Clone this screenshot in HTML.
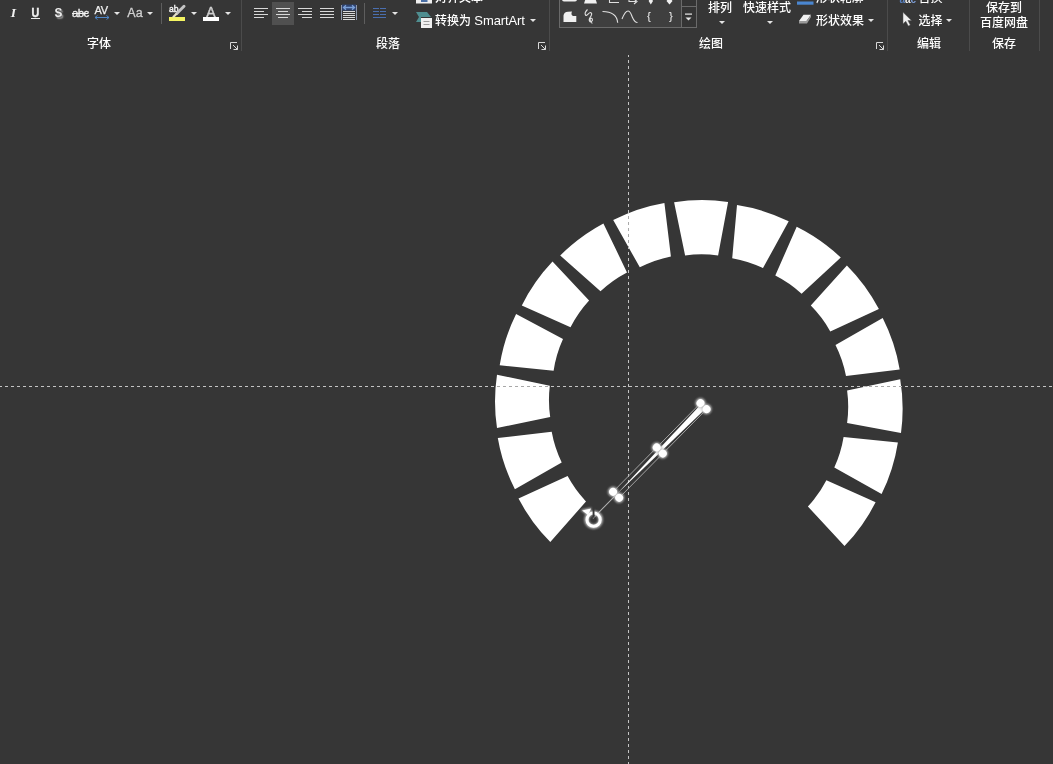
<!DOCTYPE html>
<html lang="zh-CN">
<head>
<meta charset="utf-8">
<title>PowerPoint</title>
<style>
*{margin:0;padding:0;box-sizing:border-box}
html,body{width:1053px;height:764px;overflow:hidden;background:#363636}
body{position:relative;font-family:"Liberation Sans","Noto Sans CJK SC",sans-serif;font-size:12px;font-weight:500;color:#ffffff;line-height:1}
.t{position:absolute;white-space:nowrap;line-height:14px;height:14px}
.c{transform:translateX(-50%)}
.sep{position:absolute;width:1px;background:#4b4b4b;top:0;height:51px}
.sep2{position:absolute;width:1px;background:#5e5e5e;top:3px;height:21px}
.g{color:#f0f0f0}
.ul{position:absolute;height:1px;background:#e8e8e8}
.bar{position:absolute;height:4px}
.hl{position:absolute;background:#505050}
.gal{position:absolute;background:#3f3f3f;border:1px solid #6a6a6a}
.gal2{position:absolute;background:#343434;border:1px solid #6a6a6a}
.gal3{position:absolute;background:#6a6a6a}
.ar{position:absolute;width:0;height:0;border-left:3px solid transparent;border-right:3px solid transparent;border-top:3px solid #e4e4e4}
svg{position:absolute;left:0;top:0;overflow:visible}
#stage{position:absolute;left:0;top:0;width:1053px;height:764px;will-change:transform;transform:translateZ(0)}
</style>
</head>
<body>
<div id="stage">
<svg id="canvas" width="1053" height="764" viewBox="0 0 1053 764">
<defs><clipPath id="gclip"><path d="M550.3 542.0A180.0 180.0 0 0 1 518.5 498.4L567.6 476.0A120.0 120.0 0 0 0 586.0 501.4ZM514.9 489.3A180.0 180.0 0 0 1 497.8 438.0L551.7 431.7A120.0 120.0 0 0 0 561.7 462.4ZM497.0 428.1A180.0 180.0 0 0 1 497.0 374.8L549.8 385.7A120.0 120.0 0 0 0 550.2 417.1ZM499.7 365.2A180.0 180.0 0 0 1 516.1 314.0L563.0 339.0A120.0 120.0 0 0 0 553.6 370.7ZM521.8 305.5A180.0 180.0 0 0 1 552.5 261.5L589.1 300.5A120.0 120.0 0 0 0 570.5 327.3ZM560.2 255.6A180.0 180.0 0 0 1 603.4 223.4L627.0 272.4A120.0 120.0 0 0 0 600.5 291.2ZM613.2 220.1A180.0 180.0 0 0 1 664.4 203.0L670.9 256.4A120.0 120.0 0 0 0 639.8 267.3ZM674.1 202.3A180.0 180.0 0 0 1 728.1 202.0L718.1 255.4A120.0 120.0 0 0 0 685.1 255.4ZM737.0 205.0A180.0 180.0 0 0 1 788.7 221.3L763.0 268.1A120.0 120.0 0 0 0 732.2 258.2ZM796.7 226.7A180.0 180.0 0 0 1 840.8 257.6L801.6 293.7A120.0 120.0 0 0 0 775.3 275.5ZM846.9 265.5A180.0 180.0 0 0 1 878.9 309.1L830.3 331.4A120.0 120.0 0 0 0 810.8 305.6ZM882.7 318.0A180.0 180.0 0 0 1 899.7 369.4L846.0 376.0A120.0 120.0 0 0 0 835.5 345.0ZM900.2 379.2A180.0 180.0 0 0 1 901.0 432.9L847.1 422.9A120.0 120.0 0 0 0 847.1 390.4ZM897.9 442.4A180.0 180.0 0 0 1 881.6 494.0L834.3 467.5A120.0 120.0 0 0 0 843.6 437.0ZM875.6 502.2A180.0 180.0 0 0 1 844.5 546.1L807.9 506.6A120.0 120.0 0 0 0 826.4 480.2Z"/></clipPath></defs>
<path id="gauge" fill="#ffffff" d="M550.3 542.0A180.0 180.0 0 0 1 518.5 498.4L567.6 476.0A120.0 120.0 0 0 0 586.0 501.4ZM514.9 489.3A180.0 180.0 0 0 1 497.8 438.0L551.7 431.7A120.0 120.0 0 0 0 561.7 462.4ZM497.0 428.1A180.0 180.0 0 0 1 497.0 374.8L549.8 385.7A120.0 120.0 0 0 0 550.2 417.1ZM499.7 365.2A180.0 180.0 0 0 1 516.1 314.0L563.0 339.0A120.0 120.0 0 0 0 553.6 370.7ZM521.8 305.5A180.0 180.0 0 0 1 552.5 261.5L589.1 300.5A120.0 120.0 0 0 0 570.5 327.3ZM560.2 255.6A180.0 180.0 0 0 1 603.4 223.4L627.0 272.4A120.0 120.0 0 0 0 600.5 291.2ZM613.2 220.1A180.0 180.0 0 0 1 664.4 203.0L670.9 256.4A120.0 120.0 0 0 0 639.8 267.3ZM674.1 202.3A180.0 180.0 0 0 1 728.1 202.0L718.1 255.4A120.0 120.0 0 0 0 685.1 255.4ZM737.0 205.0A180.0 180.0 0 0 1 788.7 221.3L763.0 268.1A120.0 120.0 0 0 0 732.2 258.2ZM796.7 226.7A180.0 180.0 0 0 1 840.8 257.6L801.6 293.7A120.0 120.0 0 0 0 775.3 275.5ZM846.9 265.5A180.0 180.0 0 0 1 878.9 309.1L830.3 331.4A120.0 120.0 0 0 0 810.8 305.6ZM882.7 318.0A180.0 180.0 0 0 1 899.7 369.4L846.0 376.0A120.0 120.0 0 0 0 835.5 345.0ZM900.2 379.2A180.0 180.0 0 0 1 901.0 432.9L847.1 422.9A120.0 120.0 0 0 0 847.1 390.4ZM897.9 442.4A180.0 180.0 0 0 1 881.6 494.0L834.3 467.5A120.0 120.0 0 0 0 843.6 437.0ZM875.6 502.2A180.0 180.0 0 0 1 844.5 546.1L807.9 506.6A120.0 120.0 0 0 0 826.4 480.2Z"/>
<g id="guides" stroke="#c4c4c4" stroke-width="1" stroke-dasharray="3 3" stroke-dashoffset="1" shape-rendering="crispEdges"><line x1="0" y1="386.5" x2="1053" y2="386.5"/><line x1="628.5" y1="55" x2="628.5" y2="764"/></g>
<g id="guides2" clip-path="url(#gclip)" stroke="#a8a8a8" stroke-width="1" stroke-dasharray="3 3" stroke-dashoffset="1" shape-rendering="crispEdges"><line x1="0" y1="386.5" x2="1053" y2="386.5"/><line x1="628.5" y1="55" x2="628.5" y2="764"/></g>
<defs><filter id="glow" x="-50%" y="-50%" width="200%" height="200%"><feGaussianBlur stdDeviation="0.9"/></filter></defs>
<g id="needle" transform="translate(616.1 494.8) rotate(-45.4)">
<line x1="0" y1="0" x2="-33" y2="0" stroke="#b4b4b4" stroke-width="1"/>
<rect x="0" y="-4.300" width="124.500" height="8.600" fill="none" stroke="#a8a8a8" stroke-width="0.900"/>
<path d="M0 0L124.500 -3.200L124.500 3.200Z" fill="#ffffff"/>
<g fill="#c8c8c8" filter="url(#glow)">
<circle cx="0" cy="-4.300" r="5"/><circle cx="0" cy="4.300" r="5"/>
<circle cx="62.200" cy="-4.300" r="5"/><circle cx="62.200" cy="4.300" r="5"/>
<circle cx="124.500" cy="-4.300" r="5"/><circle cx="124.500" cy="4.300" r="5"/>
</g>
<g fill="#ffffff">
<circle cx="0" cy="-4.300" r="3.900"/><circle cx="0" cy="4.300" r="3.900"/>
<circle cx="62.200" cy="-4.300" r="3.900"/><circle cx="62.200" cy="4.300" r="3.900"/>
<circle cx="124.500" cy="-4.300" r="3.900"/><circle cx="124.500" cy="4.300" r="3.900"/>
</g>
</g>
<g id="rot" transform="translate(593.6 519.7)">
<g filter="url(#glow)">
<circle r="7" fill="none" stroke="#c0c0c0" stroke-width="4.600"/>
<path d="M-13 -9.600L-2 -12.200L-5.400 -3.800Z" fill="#c0c0c0"/>
</g>
<circle r="6.600" fill="none" stroke="#ffffff" stroke-width="3"/>
<path d="M-1 -11.500V-2H0.900V-11.500Z" fill="#363636"/>
<path d="M-11.500 -9.200L-2.500 -11.200L-5.600 -4.600Z" fill="#ffffff"/>
</g>

</svg>
<div id="ribbon">
<!-- group separators -->
<div class="sep" style="left:241px"></div>
<div class="sep" style="left:549px"></div>
<div class="sep" style="left:887px"></div>
<div class="sep" style="left:969px"></div>
<div class="sep" style="left:1039px"></div>
<!-- small separators -->
<div class="sep2" style="left:161px"></div>
<div class="sep2" style="left:364px"></div>
<!-- font group -->
<div class="t g" style="left:9px;top:5px;width:9px;text-align:center;font:italic bold 13.5px 'Liberation Serif',serif;line-height:16px;height:16px">I</div>
<div class="t g" style="left:30px;top:5px;width:11px;text-align:center;font:bold 12.5px 'Liberation Sans',sans-serif;line-height:16px;height:16px;transform:scaleX(.86);-webkit-text-stroke:.4px #f0f0f0">U</div>
<div class="ul" style="left:31px;top:18px;width:9px"></div>
<div class="t g" style="left:53px;top:5px;width:11px;text-align:center;font:bold 13px 'Liberation Sans',sans-serif;line-height:16px;height:16px;text-shadow:1.5px 1.5px 1.5px #999;transform:scaleX(.9)">S</div>
<div class="t g" style="left:72px;top:6px;font:11.5px 'Liberation Sans',sans-serif;line-height:14px;letter-spacing:-0.7px;text-decoration:line-through;-webkit-text-stroke:.3px #f0f0f0">abc</div>
<div class="t g" style="left:94.600px;top:3px;font:11px 'Liberation Sans',sans-serif;line-height:14px;letter-spacing:-0.3px;-webkit-text-stroke:.25px #f0f0f0">AV</div>
<svg width="1053" height="55" viewBox="0 0 1053 55">
<g stroke="#4f86c6" stroke-width="1" fill="none"><path d="M95 17.5H109M97.500 15.500L95 17.500L97.500 19.500M106.500 15.500L109 17.500L106.500 19.500"/></g>
</svg>
<div class="ar" style="left:114px;top:12px"></div>
<div class="t" style="left:127.300px;top:5px;font:12.5px 'Liberation Sans',sans-serif;line-height:16px;height:16px;color:#d0d0d0;-webkit-text-stroke:.3px #d0d0d0">Aa</div>
<div class="ar" style="left:147px;top:12px"></div>
<div class="t g" style="left:169px;top:3px;font:8.5px 'Liberation Sans',sans-serif;line-height:12px;height:12px;-webkit-text-stroke:.45px #f0f0f0">ab</div>
<div class="bar" style="left:169px;top:17px;width:16px;background:#f4f462"></div>
<div class="ar" style="left:191px;top:12px"></div>
<div class="t" style="left:205px;top:4px;width:12px;text-align:center;font:14px 'Liberation Sans',sans-serif;line-height:16px;height:16px;color:#d0d0d0;-webkit-text-stroke:.4px #d0d0d0">A</div>
<div class="bar" style="left:203px;top:17px;width:16px;background:#ffffff"></div>
<div class="ar" style="left:225px;top:12px"></div>
<div class="t c" style="left:99px;top:37px">字体</div>
<!-- paragraph group -->
<div class="hl" style="left:272px;top:2px;width:22px;height:23px"></div>
<div class="t" style="left:435px;top:-9px">对齐文本</div>
<div class="t" style="left:435px;top:14px">转换为 <span style="font-size:13px;letter-spacing:-0.1px">SmartArt</span></div>
<div class="ar" style="left:530px;top:19px"></div>
<div class="ar" style="left:392px;top:12px"></div>
<div class="t c" style="left:388px;top:37px">段落</div>
<!-- drawing group -->
<div class="gal" style="left:559px;top:-2px;width:123px;height:30px"></div>
<div class="gal2" style="left:681px;top:-2px;width:16px;height:30px"></div>
<div class="gal3" style="left:681px;top:6px;width:16px;height:1px"></div>
<div class="t" style="left:650px;top:9px;font:11.5px 'Liberation Sans',sans-serif;line-height:14px;width:0;color:#f0f0f0"><span style="position:absolute;left:-3px">{</span><span style="position:absolute;left:19px">}</span></div>
<div class="t c" style="left:720px;top:1px">排列</div>
<div class="ar" style="left:719px;top:21px"></div>
<div class="t c" style="left:767px;top:1px">快速样式</div>
<div class="ar" style="left:767px;top:21px"></div>
<div class="t" style="left:816px;top:-9px">形状轮廓</div>
<div class="t" style="left:816px;top:14px">形状效果</div>
<div class="ar" style="left:868px;top:19px"></div>
<div class="t c" style="left:711px;top:37px">绘图</div>
<!-- editing group -->
<div class="t" style="left:918.5px;top:-9px">替换</div>
<div class="t" style="left:918.5px;top:14px">选择</div>
<div class="ar" style="left:946px;top:19px"></div>
<div class="t c" style="left:929px;top:37px">编辑</div>
<!-- save group -->
<div class="t c" style="left:1004px;top:1px">保存到</div>
<div class="t c" style="left:1004px;top:16px">百度网盘</div>
<div class="t c" style="left:1004px;top:37px">保存</div>
<!-- icons -->
<svg width="1053" height="55" viewBox="0 0 1053 55">
<g id="launchers" fill="none" stroke="#d8d8d8" stroke-width="1">
<path id="ln" d="M230.5 49V42.5H237M233 45L237.5 49.5M237.5 45.5V49.5H233.5"/>
<use href="#ln" x="308"/><use href="#ln" x="646"/>
</g>
<g id="align" stroke="#d8d8d8" stroke-width="1" shape-rendering="crispEdges">
<path d="M254 8.5H268M254 11.5H264M254 14.5H268M254 17.5H264"/>
<path d="M276 8.5H290M278 11.5H288M276 14.5H290M278 17.5H288"/>
<path d="M298 8.5H312M302 11.5H312M298 14.5H312M302 17.5H312"/>
<path d="M320 8.5H334M320 11.5H334M320 14.5H334M320 17.5H334"/>
</g>
<g id="distribute">
<rect x="342" y="4.500" width="14" height="6" fill="#2e4370"/>
<path d="M341.5 5V20M356.5 5V20" stroke="#8e98ac" stroke-width="1" shape-rendering="crispEdges"/>
<path d="M343.500 7.500H354.500M346 5.300L343.500 7.500L346 9.700M352 5.300L354.500 7.500L352 9.700" stroke="#7aa0d8" stroke-width="1.300" fill="none"/>
<path d="M343 11.5H355M343 13.5H355M343 15.5H355M343 17.5H355M343 19.5H355" stroke="#d8d8d8" stroke-width="1" shape-rendering="crispEdges"/>
</g>
<g id="columns" stroke="#4a6fb0" stroke-width="1" shape-rendering="crispEdges">
<path d="M373 8.5H379M380 8.5H386M373 11.5H379M380 11.5H386M373 14.5H379M380 14.5H386M373 17.5H386"/>
</g>
<g id="highlighter">
<path d="M184 6.300L176.800 13.500" stroke="#c4c4c4" stroke-width="3" stroke-linecap="round"/><path d="M176.800 13.500L173 17.300" stroke="#e4e0c8" stroke-width="2.200"/>
</g>
<g id="aligntext">
<rect x="416" y="-4" width="16" height="7.500" fill="#f0f0f0"/>
<rect x="421" y="-4" width="6.500" height="6" fill="#4a6fa5"/>
</g>
<g id="smartart">
<path d="M416 12H427L431 17H421V22H416L419 17Z" fill="#4f8e90"/>
<rect x="421" y="18" width="11" height="10" fill="#f0f0f0"/>
<path d="M423.500 21.500H429.500M423.500 24.500H429.500" stroke="#9a9a9a" stroke-width="1"/>
</g>
<g id="shapes" fill="none" stroke="#e0e0e0" stroke-width="1.1">
<rect x="562" y="-6" width="15" height="7.500" rx="2" fill="#f0f0f0" stroke="none"/>
<path d="M584 3.500L586.500 -4H594.500L597 3.500Z" fill="#f0f0f0" stroke="none"/>
<path d="M609.500 -3V2.500H619"/>
<path d="M629 -2V1.500H636M634 -1L637 1.500L634 4"/>
<path d="M650.800 -3L653 1L650.800 4.500L648.600 1Z" fill="#f0f0f0" stroke="none"/>
<path d="M669.500 -3L672.500 1L669.500 4.500L666.500 1Z" fill="#f0f0f0" stroke="none"/>
<path d="M563.500 22V15.500Q564 12 568 11.800L572 11.500Q570.500 14.500 573 16H576.300V22Z" fill="#f0f0f0" stroke="none"/>
<path d="M587.500 9.500C586 11 584.500 13.500 585.500 15C587 16.500 588.500 12.500 590.500 12.500C593 13 591 16.500 589.500 18.500C588.500 20.500 590 22.500 591.500 21.500C593.500 20 592 17.500 590.500 18.500C589.500 19.500 591 22 592.300 23.500"/>
<path d="M602.500 11.500C611 11.500 617 15 617.700 22.800"/>
<path d="M622 19C624 14 626 11 628 11C630.500 11 631 14 632.500 17.500C634 21 635.500 22.500 637.500 22.500"/>
</g>
<g id="more" fill="#e8e8e8">
<rect x="685" y="13.500" width="7" height="1.200"/>
<path d="M685.500 17.500H691.500L688.500 20.500Z"/>
</g>
<g id="outline">
<rect x="797" y="1.500" width="16.500" height="3.200" fill="#4a86d0"/>
</g>
<g id="effect">
<path d="M799 21L803.500 14.800H811L806.500 21Z" fill="#f0f0f0"/>
<path d="M799 21L806.500 21L811 14.800V17L807 23.500H799Z" fill="#9a9a9a"/>
</g>
<g id="replace" font-family="Liberation Sans, sans-serif" font-weight="bold" font-size="10">
<text x="899.500" y="2.800" fill="#5a82c0">a</text>
<text x="905" y="2.800" fill="#f0f0f0">a</text>
<text x="910.500" y="2.800" fill="#7a9ad0">c</text>
</g>
<g id="cursor">
<path d="M903 12.300V23.800L905.800 21.300L908.300 26L910.300 25L907.900 20.500H911.500Z" fill="#f0f0f0" stroke="#555" stroke-width="0.500"/>
</g>

</svg>
</div>

</div>
</body>
</html>
